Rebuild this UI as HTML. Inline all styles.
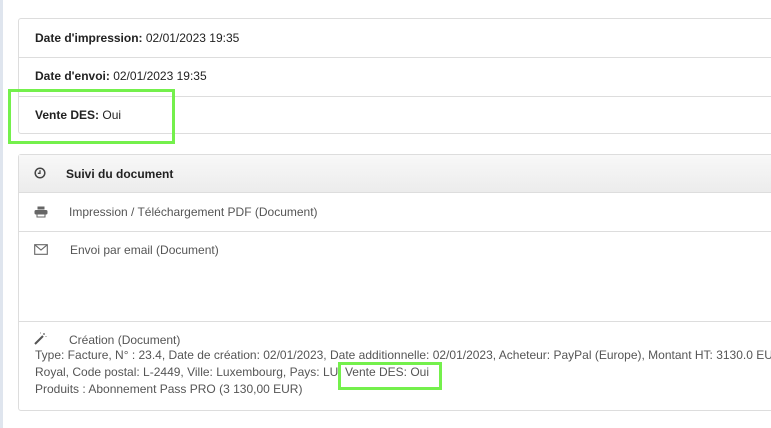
<!DOCTYPE html>
<html><head><meta charset="utf-8"><style>
*{margin:0;padding:0;box-sizing:border-box}
body{width:771px;height:428px;overflow:hidden;background:#fff;font-family:"Liberation Sans",Arial,sans-serif;font-size:12px;color:#222;position:relative}
.strip{position:absolute;left:0;top:0;width:3px;height:428px;background:#dfe5ee}
.panel{position:absolute;left:18px;width:770px;border:1px solid #ddd;border-radius:3px;background:#fff}
.row{position:absolute;left:0;right:0;border-top:1px solid #ddd}
.t{position:absolute;left:16px;white-space:nowrap}
b{font-weight:bold}
.g{position:absolute;border:3px solid #74f04c}
.gray{color:#555}
svg{position:absolute}
</style></head><body>
<div class="strip"></div>
<div class="panel" style="top:18px;height:116px">
  <div class="t" style="top:12px"><b>Date d'impression:</b> 02/01/2023 19:35</div>
  <div class="row" style="top:38px;height:1px"></div>
  <div class="t" style="top:50px"><b>Date d'envoi:</b> 02/01/2023 19:35</div>
  <div class="row" style="top:77px;height:1px"></div>
  <div class="t" style="top:89px"><b>Vente DES:</b> Oui</div>
</div>
<div class="g" style="left:8px;top:89px;width:167px;height:55px"></div>

<div class="panel" style="top:154px;height:257px">
  <div style="position:absolute;left:0;right:0;top:0;height:38px;background:linear-gradient(#f8f8f8,#ececec);border-bottom:1px solid #ddd"></div>
  <svg style="left:15px;top:12px" width="12" height="12" viewBox="0 0 12 12"><circle cx="6" cy="6" r="4.8" fill="none" stroke="#444" stroke-width="1.5"/><path d="M6 3.2V6.3H3.8" fill="none" stroke="#444" stroke-width="1.3"/></svg>
  <div class="t" style="left:47px;top:12px"><b>Suivi du document</b></div>
  <svg style="left:15px;top:51px" width="14" height="12" viewBox="0 0 14 12"><rect x="3.5" y="0.5" width="7" height="3" fill="#666"/><rect x="0.5" y="4" width="13" height="4.5" rx="1.5" fill="#666"/><rect x="3" y="8" width="8" height="3" fill="#fff" stroke="#666"/></svg>
  <div class="t gray" style="left:50px;top:50px">Impression / Téléchargement PDF (Document)</div>
  <div class="row" style="top:76px;height:1px"></div>
  <svg style="left:15px;top:89px" width="14" height="11" viewBox="0 0 14 11"><rect x="0.7" y="0.7" width="12.6" height="9.6" fill="none" stroke="#666" stroke-width="1.1"/><path d="M0.7 0.7L7 6L13.3 0.7" fill="none" stroke="#666" stroke-width="1.1"/></svg>
  <div class="t gray" style="left:51px;top:88px">Envoi par email (Document)</div>
  <div class="row" style="top:166px;height:1px"></div>
  <svg style="left:15px;top:177px" width="13" height="13" viewBox="0 0 13 13"><path d="M1 12L9 4" stroke="#555" stroke-width="2"/><path d="M10 1v2M9 2h2M12 4v1M6 1h1" stroke="#666" stroke-width="0.8"/></svg>
  <div class="t gray" style="left:50px;top:178px">Création (Document)</div>
  <div class="t gray" style="left:16px;top:192px;line-height:17px">Type: Facture, N° : 23.4, Date de création: 02/01/2023, Date additionnelle: 02/01/2023, Acheteur: PayPal (Europe), Montant HT: 3130.0 EUR<br>Royal, Code postal: L-2449, Ville: Luxembourg, Pays: LU, Vente DES: Oui<br>Produits : Abonnement Pass PRO (3 130,00 EUR)</div>
</div>
<div class="g" style="left:338px;top:362px;width:104px;height:28px"></div>
</body></html>
